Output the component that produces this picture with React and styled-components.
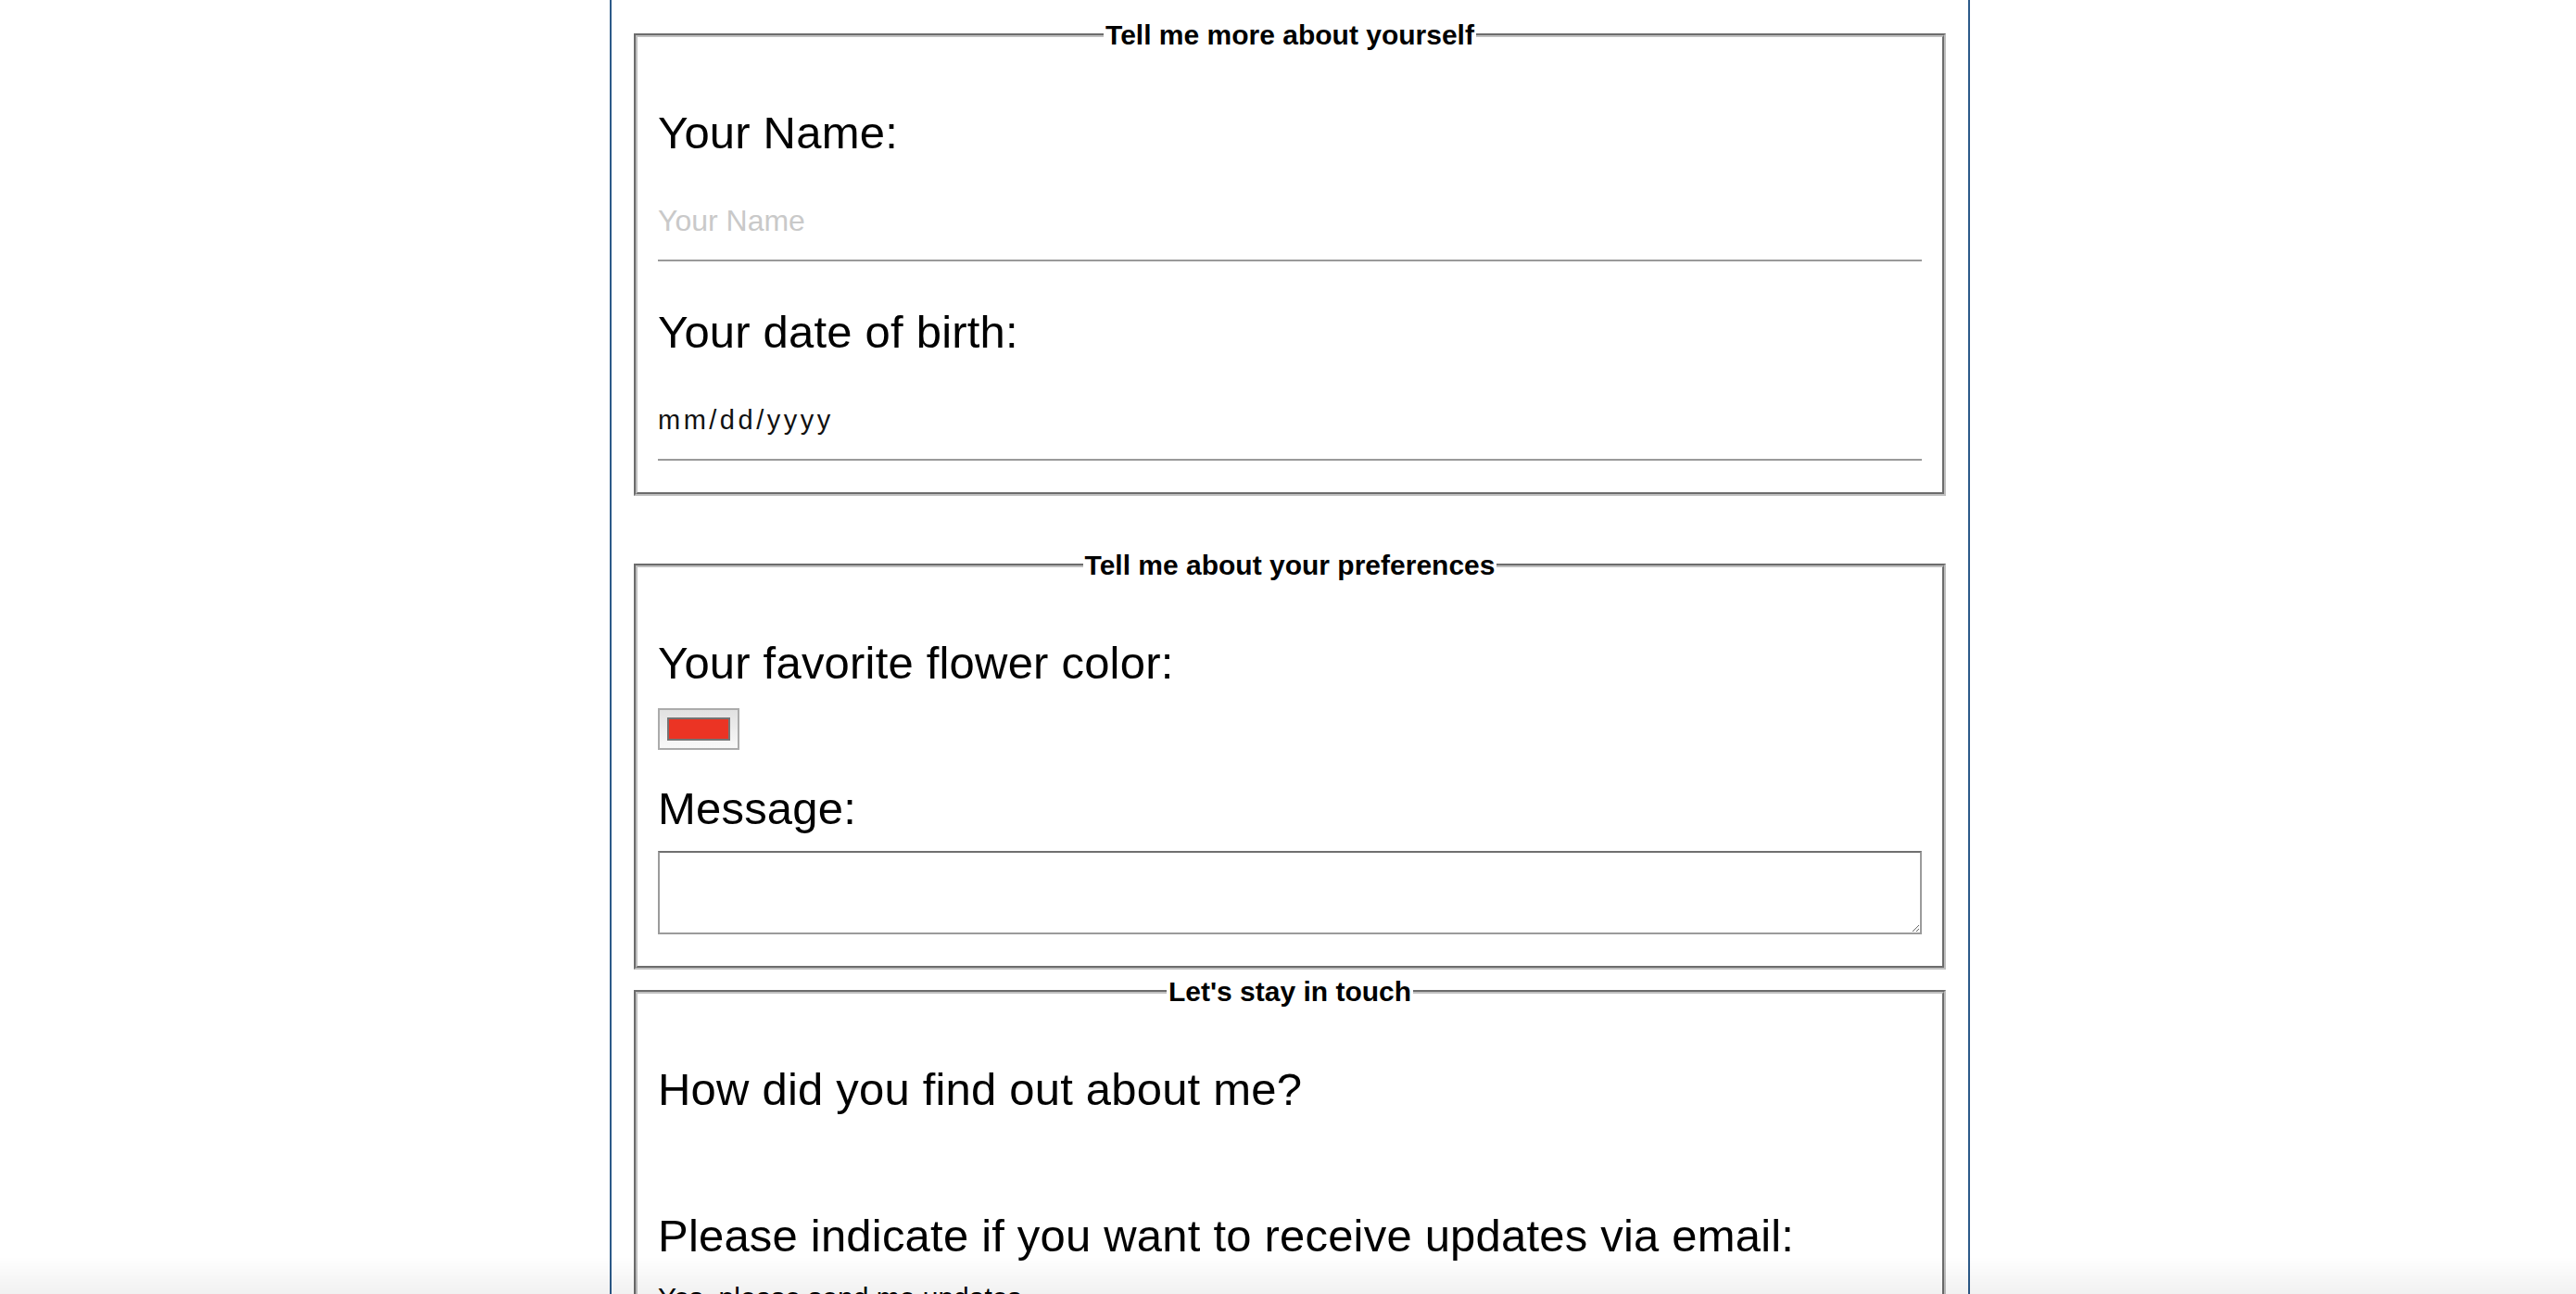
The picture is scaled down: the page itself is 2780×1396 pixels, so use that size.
import styled, { createGlobalStyle } from 'styled-components'

const GlobalStyle = createGlobalStyle`
  html, body {
    margin: 0;
    padding: 0;
    background: #fff;
  }
  body {
    font-family: "Liberation Sans", Arial, Helvetica, sans-serif;
    color: #000;
  }
`

const Page = styled.div`
  box-sizing: border-box;
  width: 1468px;
  margin: 0 0 0 calc(50% - 732px);
  padding: 21px 20px 60px;
  border-left: 2px solid #2c5a89;
  border-right: 2px solid #2c5a89;
`

const Section = styled.fieldset`
  margin: 0 4px ${(p) => p.$gap}px;
  padding: 12px 22px 34px;
  border: 4px groove #c0c0c0;
  min-width: 0;
`

const Legend = styled.legend`
  margin: 0 auto;
  padding: 0 2px;
  font-size: 30px;
  font-weight: bold;
  line-height: 34px;
`

const Field = styled.div`
  margin-top: ${(p) => p.$space}px;
`

const Label = styled.label`
  display: block;
  font-size: 49px;
  letter-spacing: 0.2px;
  line-height: 55px;
`

const LineInput = styled.input`
  display: block;
  box-sizing: border-box;
  width: 100%;
  margin: 30px 0 0;
  padding: 20px 0 25px;
  border: none;
  border-bottom: 2px solid #9a9a9a;
  outline: none;
  background: transparent;
  font-family: inherit;
  font-size: ${(p) => p.$size}px;
  letter-spacing: ${(p) => p.$spacing || 0}px;
  line-height: 34px;
  color: #000;

  &::placeholder {
    color: ${(p) => (p.$dark ? '#111' : '#c9c9c9')};
    opacity: 1;
  }
`

const ColorWell = styled.input`
  display: block;
  -webkit-appearance: none;
  appearance: none;
  box-sizing: border-box;
  width: 88px;
  height: 45px;
  margin: 21px 0 0;
  padding: 8px;
  border: 2px solid #ababab;
  border-radius: 0;
  background: linear-gradient(#e1e1e1, #f9f9f9);
  cursor: pointer;

  &::-webkit-color-swatch-wrapper {
    padding: 0;
  }
  &::-webkit-color-swatch {
    border: 2px solid #747474;
    border-radius: 0;
  }
`

const MessageBox = styled.textarea`
  display: block;
  box-sizing: border-box;
  width: 100%;
  height: 90px;
  margin: 18px 0 0;
  border: 2px solid #9b9b9b;
  border-top-color: #707070;
  font-family: inherit;
  font-size: 30px;
`

const Option = styled.label`
  display: block;
  margin-top: 22px;
  font-size: 30px;
  line-height: 34px;
`

const BottomFade = styled.div`
  position: fixed;
  left: 0;
  right: 0;
  bottom: 0;
  height: 40px;
  pointer-events: none;
  background: linear-gradient(rgba(0, 0, 0, 0), rgba(0, 0, 0, 0.055));
`

export default function App() {
  return (
    <>
      <GlobalStyle />
      <Page>
        <form onSubmit={(e) => e.preventDefault()}>
          <Section $gap={58}>
            <Legend>Tell me more about yourself</Legend>
            <Field $space={49}>
              <Label htmlFor="name">Your Name:</Label>
              <LineInput id="name" type="text" placeholder="Your Name" $size={32} />
            </Field>
            <Field $space={49}>
              <Label htmlFor="dob">Your date of birth:</Label>
              <LineInput
                id="dob"
                type="text"
                placeholder="mm/dd/yyyy"
                $size={29}
                $spacing={3.5}
                $dark
              />
            </Field>
          </Section>

          <Section $gap={7}>
            <Legend>Tell me about your preferences</Legend>
            <Field $space={49}>
              <Label htmlFor="flower">Your favorite flower color:</Label>
              <ColorWell id="flower" type="color" defaultValue="#eb3424" />
            </Field>
            <Field $space={36}>
              <Label htmlFor="message">Message:</Label>
              <MessageBox id="message" />
            </Field>
          </Section>

          <Section $gap={8}>
            <Legend>Let's stay in touch</Legend>
            <Field $space={49}>
              <Label>How did you find out about me?</Label>
            </Field>
            <Field $space={103}>
              <Label>Please indicate if you want to receive updates via email:</Label>
              <Option>Yes, please send me updates</Option>
            </Field>
          </Section>
        </form>
      </Page>
      <BottomFade />
    </>
  )
}
